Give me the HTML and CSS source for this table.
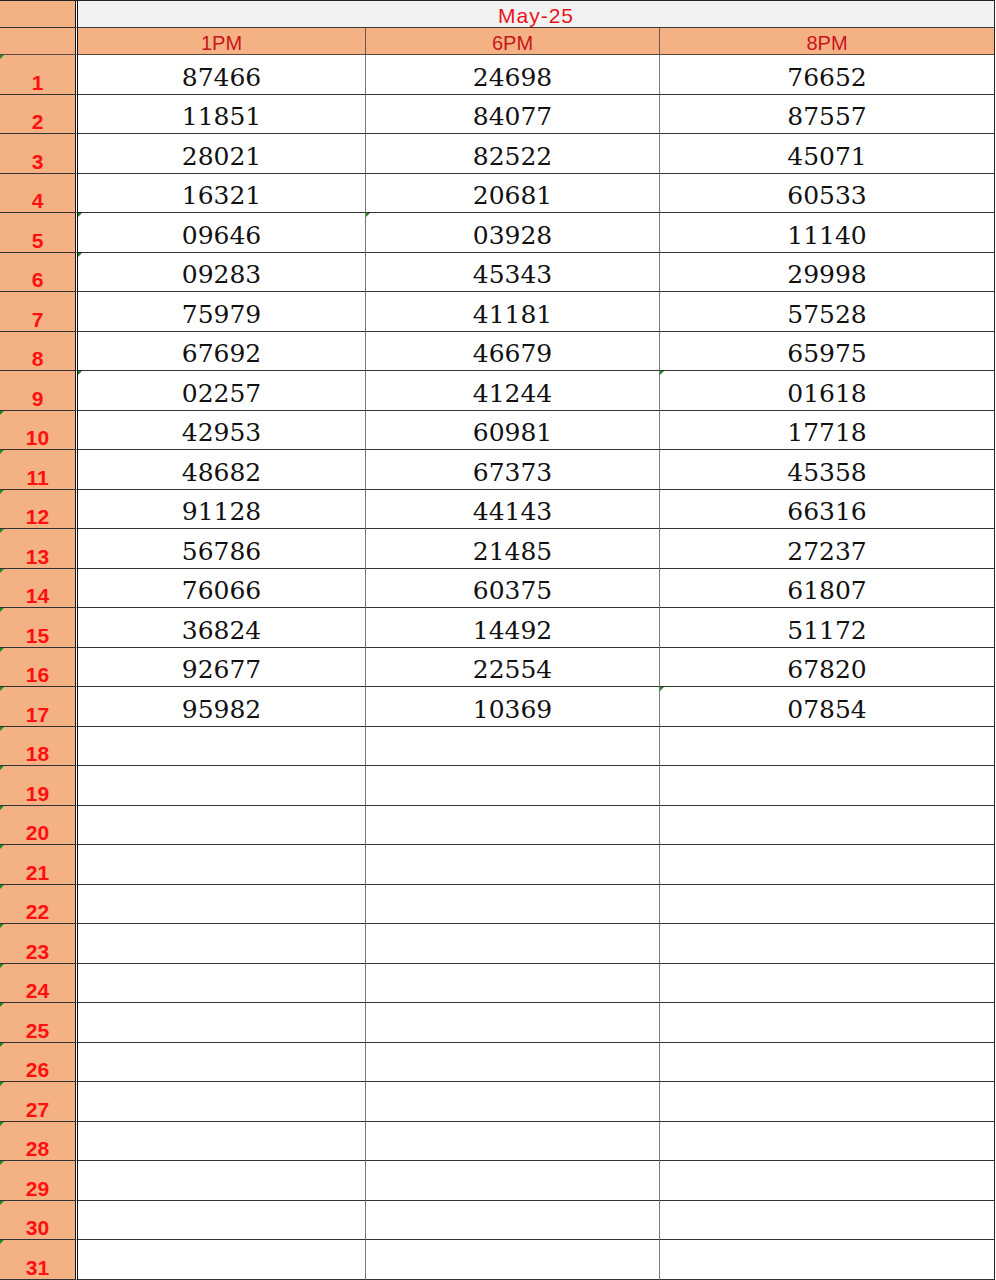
FILE: index.html
```html
<!DOCTYPE html>
<html>
<head>
<meta charset="utf-8">
<link rel="stylesheet" href="styles.css">
</head>
<body>
<div class="sheet">
  <div class="lbl hdr1"></div>
  <div class="month">May-25</div>
  <div class="lbl hdr2"></div>
  <div class="col">1PM</div>
  <div class="col">6PM</div>
  <div class="col last">8PM</div>

  <div class="lbl tri">1</div><div class="c">87466</div><div class="c">24698</div><div class="c last">76652</div>
  <div class="lbl">2</div><div class="c">11851</div><div class="c">84077</div><div class="c last">87557</div>
  <div class="lbl">3</div><div class="c">28021</div><div class="c">82522</div><div class="c last">45071</div>
  <div class="lbl">4</div><div class="c">16321</div><div class="c">20681</div><div class="c last">60533</div>
  <div class="lbl">5</div><div class="c tri">09646</div><div class="c tri">03928</div><div class="c last">11140</div>
  <div class="lbl">6</div><div class="c tri">09283</div><div class="c">45343</div><div class="c last">29998</div>
  <div class="lbl">7</div><div class="c">75979</div><div class="c">41181</div><div class="c last">57528</div>
  <div class="lbl">8</div><div class="c">67692</div><div class="c">46679</div><div class="c last">65975</div>
  <div class="lbl">9</div><div class="c tri">02257</div><div class="c">41244</div><div class="c last tri">01618</div>
  <div class="lbl tri">10</div><div class="c">42953</div><div class="c">60981</div><div class="c last">17718</div>
  <div class="lbl tri">11</div><div class="c">48682</div><div class="c">67373</div><div class="c last">45358</div>
  <div class="lbl tri">12</div><div class="c">91128</div><div class="c">44143</div><div class="c last">66316</div>
  <div class="lbl tri">13</div><div class="c">56786</div><div class="c">21485</div><div class="c last">27237</div>
  <div class="lbl tri">14</div><div class="c">76066</div><div class="c">60375</div><div class="c last">61807</div>
  <div class="lbl tri">15</div><div class="c">36824</div><div class="c">14492</div><div class="c last">51172</div>
  <div class="lbl tri">16</div><div class="c">92677</div><div class="c">22554</div><div class="c last">67820</div>
  <div class="lbl tri">17</div><div class="c">95982</div><div class="c">10369</div><div class="c last tri">07854</div>
  <div class="lbl tri">18</div><div class="c"></div><div class="c"></div><div class="c last"></div>
  <div class="lbl tri">19</div><div class="c"></div><div class="c"></div><div class="c last"></div>
  <div class="lbl tri">20</div><div class="c"></div><div class="c"></div><div class="c last"></div>
  <div class="lbl tri">21</div><div class="c"></div><div class="c"></div><div class="c last"></div>
  <div class="lbl tri">22</div><div class="c"></div><div class="c"></div><div class="c last"></div>
  <div class="lbl tri">23</div><div class="c"></div><div class="c"></div><div class="c last"></div>
  <div class="lbl tri">24</div><div class="c"></div><div class="c"></div><div class="c last"></div>
  <div class="lbl tri">25</div><div class="c"></div><div class="c"></div><div class="c last"></div>
  <div class="lbl tri">26</div><div class="c"></div><div class="c"></div><div class="c last"></div>
  <div class="lbl tri">27</div><div class="c"></div><div class="c"></div><div class="c last"></div>
  <div class="lbl tri">28</div><div class="c"></div><div class="c"></div><div class="c last"></div>
  <div class="lbl tri">29</div><div class="c"></div><div class="c"></div><div class="c last"></div>
  <div class="lbl tri">30</div><div class="c"></div><div class="c"></div><div class="c last"></div>
  <div class="lbl tri">31</div><div class="c"></div><div class="c"></div><div class="c last"></div>
</div>
</body>
</html>
```

FILE: styles.css
```css
html, body {
  margin: 0;
  padding: 0;
  background: #ffffff;
}

.sheet {
  display: grid;
  grid-template-columns: 78px 288px 294px 334px;
  grid-template-rows: 27px 27px repeat(31, 39.5px);
  width: 995px;
  box-sizing: border-box;
  background: #ffffff;
  border-top: 1px solid #222;
  border-right: 1px solid #222;
}

.sheet > div {
  box-sizing: border-box;
  position: relative;
  display: flex;
  justify-content: center;
  align-items: flex-end;
  border-bottom: 1px solid #333;
}

.lbl {
  background: #f4b183;
  background-clip: padding-box;
  border-right: 3px double #111;
  color: #ff1010;
  font-family: "Liberation Sans", Arial, sans-serif;
  font-weight: 700;
  font-size: 21px;
  line-height: 20px;
  padding-bottom: 1px;
}

.hdr1 {
  border-bottom-color: #3a3a3a;
}

.hdr2 {
  border-bottom-color: #5a4a42 !important;
}

.month {
  grid-column: 2 / 5;
  background: #f2f2f2;
  color: #e8141c;
  font-family: "Liberation Sans", Arial, sans-serif;
  font-size: 21px;
  line-height: 20px;
  padding-bottom: 1px;
  letter-spacing: 1px;
  border-bottom-color: #3a3a3a !important;
}

.col {
  background: #f4b183;
  color: #c8141c;
  font-family: "Liberation Sans", Arial, sans-serif;
  font-size: 20px;
  line-height: 20px;
  padding-bottom: 1px;
  border-right: 1px solid #6a564c;
  border-bottom-color: #5a4a42 !important;
}

.c {
  color: #111;
  font-family: "DejaVu Serif", "Liberation Serif", serif;
  font-size: 25px;
  line-height: 24px;
  padding-bottom: 4px;
  border-right: 1px solid #7a7a7a;
}

.last {
  border-right: none !important;
}

.tri::before {
  content: "";
  position: absolute;
  left: 0;
  top: 0;
  width: 0;
  height: 0;
  border-top: 4px solid #1f8a1f;
  border-right: 4px solid transparent;
}
```
